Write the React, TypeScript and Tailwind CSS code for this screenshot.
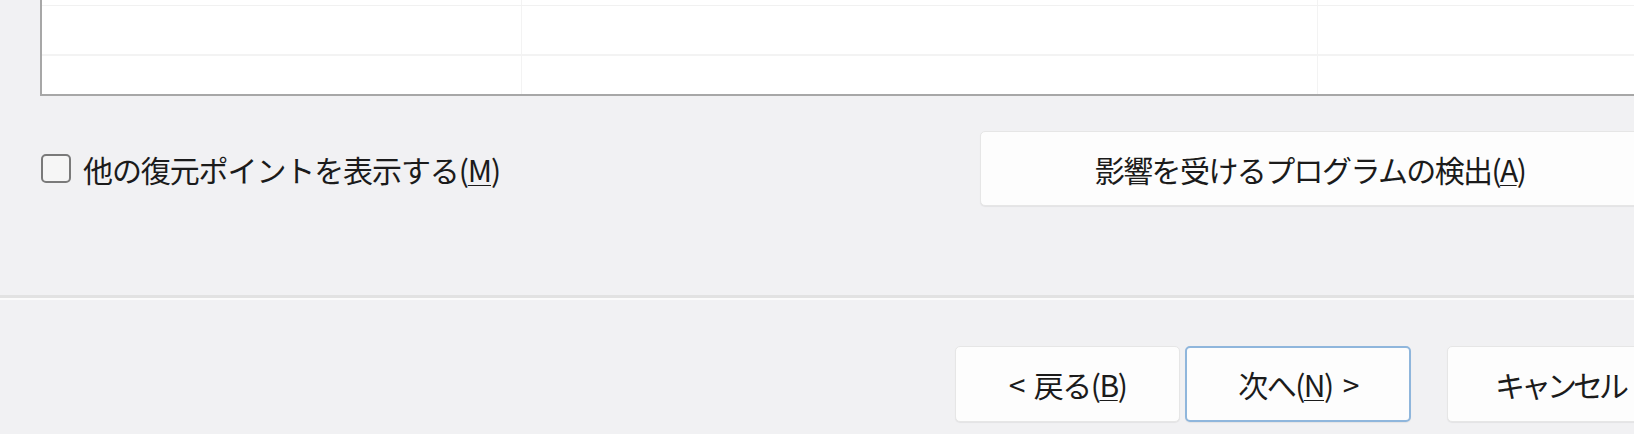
import React from "react";

const font = "font-['Noto_Sans_CJK_JP','Noto_Sans',sans-serif]";

function Btn({ children, className = "" }: { children: React.ReactNode; className?: string }) {
  return (
    <div
      className={`h-[76px] shrink-0 flex items-center justify-center rounded-[5px] bg-[#fdfdfd] shadow-[0_1px_1px_rgba(0,0,0,0.06)] ${className}`}
    >
      {children}
    </div>
  );
}

export default function App() {
  return (
    <div className={`w-[1634px] h-[434px] overflow-hidden bg-[#f1f1f3] text-[#1b1b1b] ${font}`}>
      {/* list table */}
      <div className="h-[96px] ml-[40px] border-l-2 border-b-2 border-[#a7a7a7] bg-white flex flex-col">
        <div className="h-[6px] border-b border-[#f1f1f1] grid grid-cols-[480px_796px_1fr]">
          <div className="border-r border-[#f3f3f3]" />
          <div className="border-r border-[#f3f3f3]" />
          <div />
        </div>
        <div className="h-[50px] border-b-2 border-[#f3f3f3] grid grid-cols-[480px_796px_1fr]">
          <div className="border-r border-[#f3f3f3]" />
          <div className="border-r border-[#f3f3f3]" />
          <div />
        </div>
        <div className="flex-1 grid grid-cols-[480px_796px_1fr]">
          <div className="border-r border-[#f3f3f3]" />
          <div className="border-r border-[#f3f3f3]" />
          <div />
        </div>
      </div>

      {/* middle row */}
      <div className="mt-[35px] h-[75px] flex items-center">
        <div className="flex-1 flex items-center pl-[41px]">
          <div className="w-[30px] h-[29px] rounded-[5px] border-2 border-[#7a7a7a] bg-[#f6f6f6]" />
          <span className="ml-[12px] text-[30px] tracking-[-1.1px] leading-none">
            他の復元ポイントを表示する(<span className="underline decoration-1 underline-offset-[3px]">M</span>)
          </span>
        </div>
        <div className="w-[660px] -mr-[6px] h-[75px] shrink-0 flex items-center justify-center rounded-[5px] bg-[#fdfdfd] border border-[#e6e6e6] shadow-[0_1px_1px_rgba(0,0,0,0.06)]">
          <span className="text-[30px] tracking-[-1.6px] leading-none">
            影響を受けるプログラムの検出(<span className="underline decoration-1 underline-offset-[3px]">A</span>)
          </span>
        </div>
      </div>

      {/* separator */}
      <div className="mt-[89px] h-[3px] bg-[#e2e2e2]" />
      <div className="h-[2px] bg-[#fbfbfb]" />

      {/* bottom buttons */}
      <div className="mt-[46px] flex">
        <div className="w-[955px] shrink-0" />
        <Btn className="w-[225px] border border-[#e6e6e6]">
          <span className="text-[30px] tracking-[-1.5px] leading-none">
            <span className="mr-[10px]">&lt;</span>戻る(<span className="underline decoration-1 underline-offset-[3px]">B</span>)
          </span>
        </Btn>
        <Btn className="ml-[5px] w-[226px] border-2 border-[#8fb6dc]">
          <span className="text-[30px] tracking-[-1.5px] leading-none">
            次へ(<span className="underline decoration-1 underline-offset-[3px]">N</span>)<span className="ml-[10px]">&gt;</span>
          </span>
        </Btn>
        <Btn className="ml-[36px] w-[226px] border border-[#e6e6e6]">
          <span className="text-[30px] tracking-[-4px] leading-none">キャンセル</span>
        </Btn>
      </div>
    </div>
  );
}
